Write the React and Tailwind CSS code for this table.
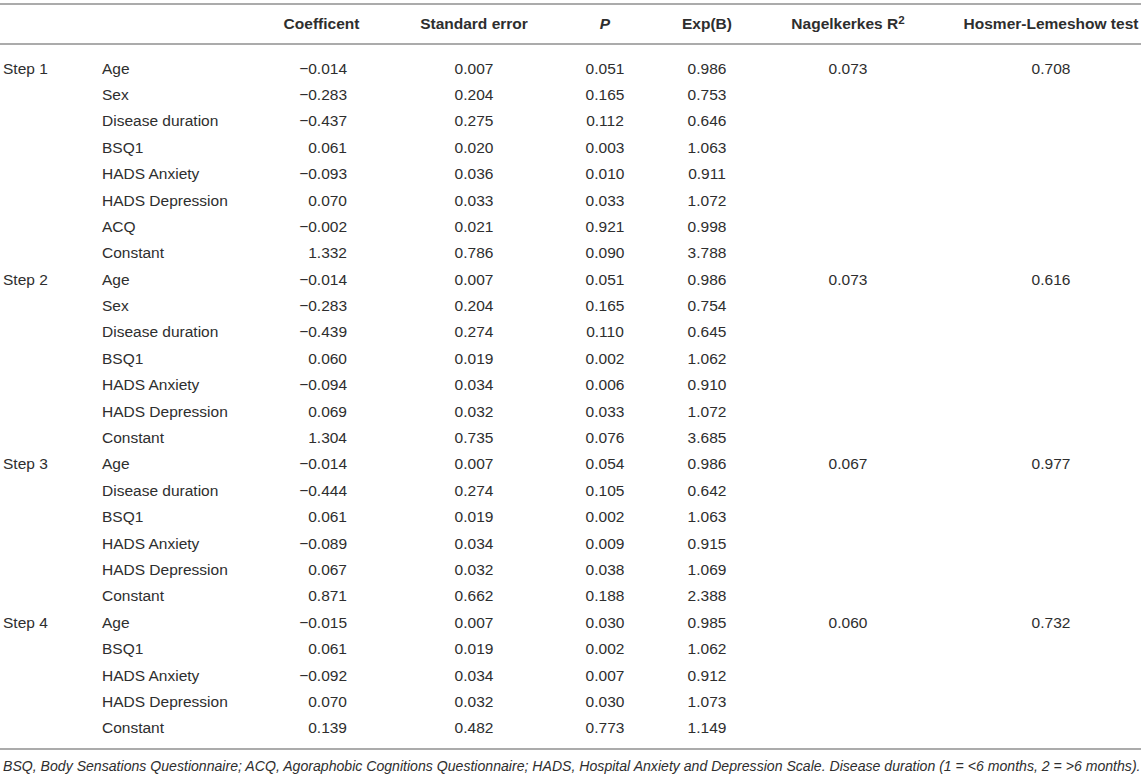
const cols = "grid grid-cols-[100px_145px_153px_152px_110px_94px_188px_199px]"

const steps = [
  {
    name: "Step 1",
    r2: "0.073",
    hl: "0.708",
    rows: [
      ["Age", "−0.014", "0.007", "0.051", "0.986"],
      ["Sex", "−0.283", "0.204", "0.165", "0.753"],
      ["Disease duration", "−0.437", "0.275", "0.112", "0.646"],
      ["BSQ1", "0.061", "0.020", "0.003", "1.063"],
      ["HADS Anxiety", "−0.093", "0.036", "0.010", "0.911"],
      ["HADS Depression", "0.070", "0.033", "0.033", "1.072"],
      ["ACQ", "−0.002", "0.021", "0.921", "0.998"],
      ["Constant", "1.332", "0.786", "0.090", "3.788"],
    ],
  },
  {
    name: "Step 2",
    r2: "0.073",
    hl: "0.616",
    rows: [
      ["Age", "−0.014", "0.007", "0.051", "0.986"],
      ["Sex", "−0.283", "0.204", "0.165", "0.754"],
      ["Disease duration", "−0.439", "0.274", "0.110", "0.645"],
      ["BSQ1", "0.060", "0.019", "0.002", "1.062"],
      ["HADS Anxiety", "−0.094", "0.034", "0.006", "0.910"],
      ["HADS Depression", "0.069", "0.032", "0.033", "1.072"],
      ["Constant", "1.304", "0.735", "0.076", "3.685"],
    ],
  },
  {
    name: "Step 3",
    r2: "0.067",
    hl: "0.977",
    rows: [
      ["Age", "−0.014", "0.007", "0.054", "0.986"],
      ["Disease duration", "−0.444", "0.274", "0.105", "0.642"],
      ["BSQ1", "0.061", "0.019", "0.002", "1.063"],
      ["HADS Anxiety", "−0.089", "0.034", "0.009", "0.915"],
      ["HADS Depression", "0.067", "0.032", "0.038", "1.069"],
      ["Constant", "0.871", "0.662", "0.188", "2.388"],
    ],
  },
  {
    name: "Step 4",
    r2: "0.060",
    hl: "0.732",
    rows: [
      ["Age", "−0.015", "0.007", "0.030", "0.985"],
      ["BSQ1", "0.061", "0.019", "0.002", "1.062"],
      ["HADS Anxiety", "−0.092", "0.034", "0.007", "0.912"],
      ["HADS Depression", "0.070", "0.032", "0.030", "1.073"],
      ["Constant", "0.139", "0.482", "0.773", "1.149"],
    ],
  },
]

export default function App() {
  return (
    <div className="w-[1145px] h-[778px] bg-white pt-[3px] text-[#2e2e2e] font-['Liberation_Sans',Arial,sans-serif]">
      <div className="w-[1141px]">
        {/* Header */}
        <div className={`${cols} h-[42px] items-center border-y-2 border-[#ababab] text-[15.5px] font-bold`}>
          <div />
          <div />
          <div className="text-center">Coefficent</div>
          <div className="text-center">Standard error</div>
          <div className="text-center italic">P</div>
          <div className="text-center">Exp(B)</div>
          <div className="text-center">
            Nagelkerkes R<sup>2</sup>
          </div>
          <div className="text-center pl-[19px]">Hosmer-Lemeshow test</div>
        </div>

        {/* Body */}
        <div className="pt-[10px] pb-[7px] border-b-2 border-[#ababab] text-[15.5px]">
          {steps.map((step) =>
            step.rows.map((r, i) => (
              <div key={step.name + i} className={`${cols} h-[26.4px] items-center`}>
                <div className="pl-[3px]">{i === 0 ? step.name : ""}</div>
                <div className="pl-[2px]">{r[0]}</div>
                <div className="text-right pr-[51px]">{r[1]}</div>
                <div className="text-center">{r[2]}</div>
                <div className="text-center">{r[3]}</div>
                <div className="text-center">{r[4]}</div>
                <div className="text-center">{i === 0 ? step.r2 : ""}</div>
                <div className="text-center pl-[19px]">{i === 0 ? step.hl : ""}</div>
              </div>
            ))
          )}
        </div>

        {/* Footnote */}
        <p className="pt-[6px] pl-[3px] text-[14.1px] italic whitespace-nowrap">
          BSQ, Body Sensations Questionnaire; ACQ, Agoraphobic Cognitions Questionnaire; HADS, Hospital Anxiety and Depression Scale. Disease duration (1 = &lt;6 months, 2 = &gt;6 months).
        </p>
      </div>
    </div>
  )
}
